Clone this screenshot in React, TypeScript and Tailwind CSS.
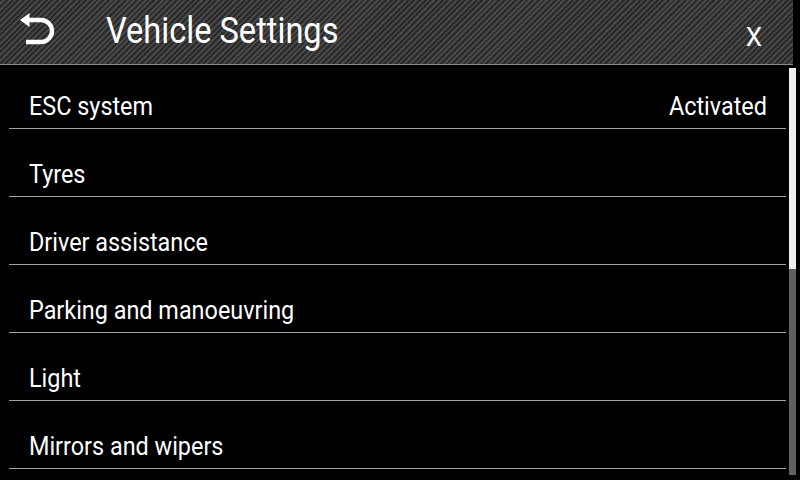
const rows = [
  { label: "ESC system", value: "Activated" },
  { label: "Tyres" },
  { label: "Driver assistance" },
  { label: "Parking and manoeuvring" },
  { label: "Light" },
  { label: "Mirrors and wipers" },
];

// back arrow, hooked like the car UI one
function BackIcon() {
  return (
    <svg width="36" height="34" viewBox="0 0 36 34" fill="none">
      <path d="M0 7 L9.5 0 V14 Z" fill="#fff" />
      <path d="M8 7 H21 A11 11 0 0 1 21 29 H6" stroke="#fff" strokeWidth="4.4" fill="none" />
    </svg>
  );
}

export default function App() {
  return (
    <div
      className="w-[800px] h-[480px] overflow-hidden bg-black text-white"
      style={{ fontFamily: "Roboto, 'Liberation Sans', sans-serif" }}
    >
      <header className="w-[793px] h-[65px] flex border-b border-[#8a8a8a] bg-[repeating-linear-gradient(135deg,#2a2a2a_0px,#2a2a2a_2px,#474747_2px,#474747_4px)]">
        <div className="pl-[20px] pt-[13px] w-[106px] shrink-0">
          <BackIcon />
        </div>
        <h1 className="mt-[13px] text-[36px] leading-none inline-block scale-x-[0.905] origin-left">
          Vehicle Settings
        </h1>
        <span className="ml-auto mr-[31px] mt-[24px] text-[26px] leading-none">X</span>
      </header>
      <div className="flex">
        <ul className="ml-[9px] w-[777px] -mt-[4px]">
          {rows.map((r) => (
            <li
              key={r.label}
              className="h-[68px] flex items-end justify-between pb-[10px] pl-[20px] pr-[19px] border-b border-[#a3a3a3] text-[26px] leading-[24px]"
            >
              <span className="inline-block scale-x-[0.9] origin-left whitespace-nowrap">{r.label}</span>
              {r.value && (
                <span className="inline-block scale-x-[0.9] origin-right whitespace-nowrap">{r.value}</span>
              )}
            </li>
          ))}
        </ul>
        <div className="ml-[3px] mt-[3px] w-[7px] h-[407px] flex flex-col">
          <div className="h-[201px] bg-[#efefef]" />
          <div className="flex-1 bg-[#606060]" />
        </div>
      </div>
    </div>
  );
}
